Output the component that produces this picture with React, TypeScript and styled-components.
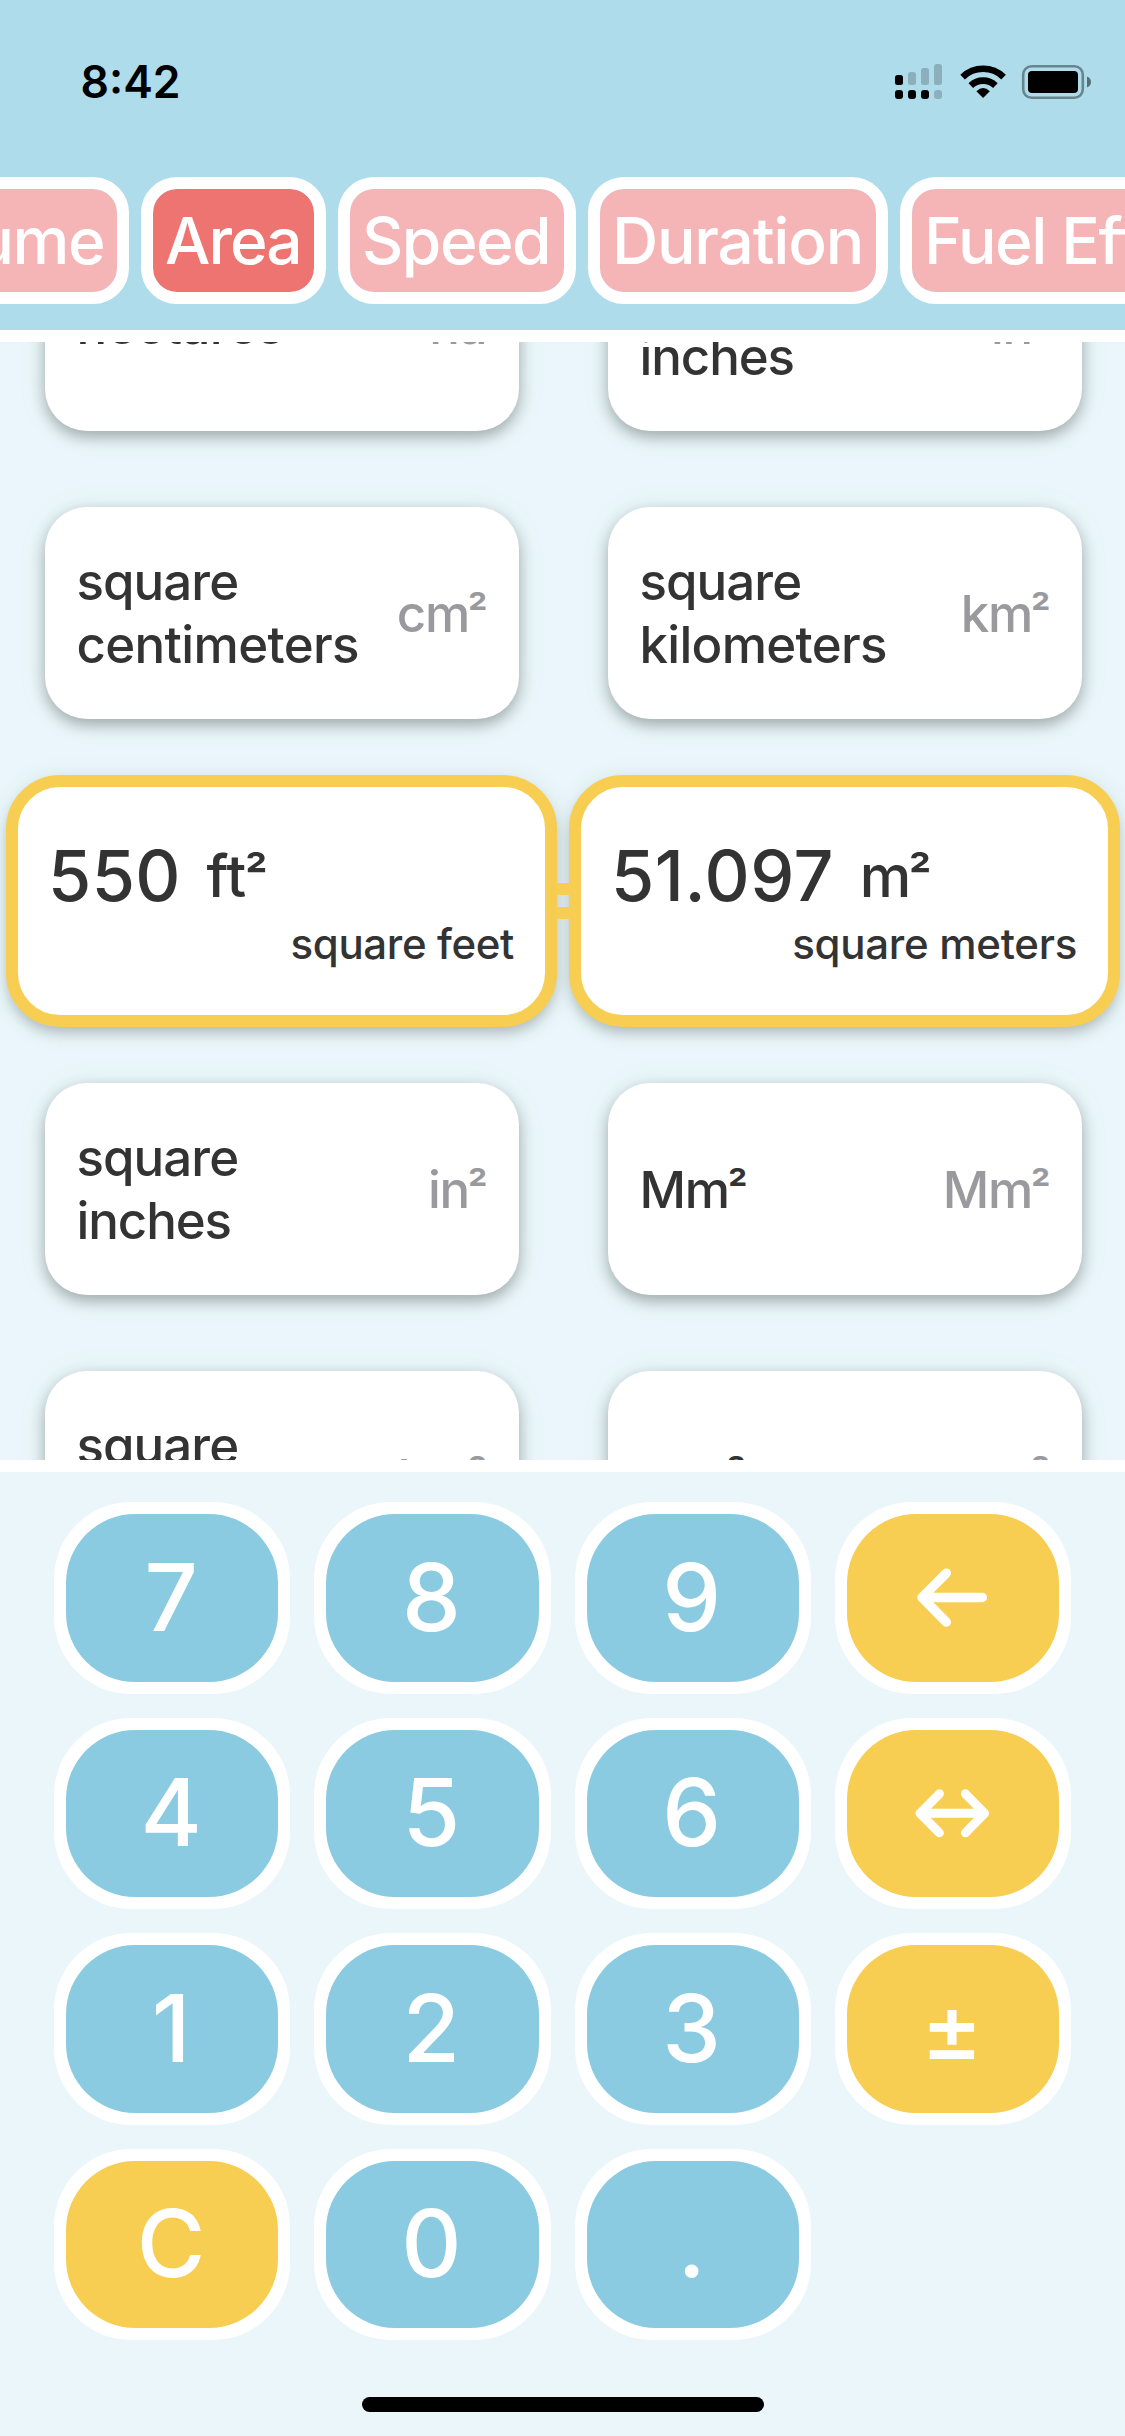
import React from 'react';
import styled, { createGlobalStyle } from 'styled-components';

const GlobalStyle = createGlobalStyle`
  *, *::before, *::after { box-sizing: border-box; }
  body { margin: 0; background: #eaf5fb; }
`;

const Screen = styled.div`
  width: 1125px;
  height: 2436px;
  display: flex;
  flex-direction: column;
  overflow: hidden;
  font-family: Inter, 'Liberation Sans', sans-serif;
  font-weight: 500;
  color: #333333;
  background: #eaf6fb;
`;

/* ---------- header ---------- */

const Header = styled.header`
  flex: none;
  height: 342px;
  background: #aedceb;
  border-bottom: 12px solid #ffffff;
`;

const StatusBar = styled.div`
  height: 177px;
  padding: 55px 34px 0 80.5px;
  display: flex;
  justify-content: space-between;
  align-items: flex-start;
  color: #000000;
`;

const Time = styled.div`
  font-size: 44.5px;
  font-weight: 600;
  line-height: 54px;
`;

const StatusIcons = styled.svg`
  display: block;
  width: 204px;
  height: 54px;
`;

const Tabs = styled.nav`
  display: flex;
  gap: 12px;
  margin-left: -141px;
  width: 1500px;
`;

const Tab = styled.button<{ $width: number; $track: number; $active?: boolean }>`
  flex: none;
  width: ${(p) => p.$width}px;
  height: 127px;
  padding: 0 0 0 12px;
  border: 12px solid #ffffff;
  border-radius: 36px;
  background: ${(p) => (p.$active ? '#ee7471' : '#f5b5b6')};
  background-clip: padding-box;
  color: #ffffff;
  font: inherit;
  font-size: 64px;
  line-height: 103px;
  letter-spacing: ${(p) => p.$track}px;
  text-align: left;
  white-space: nowrap;
`;

/* ---------- unit wheels ---------- */

const Wheel = styled.main`
  flex: none;
  height: 1130px;
  overflow: hidden;
  border-bottom: 12px solid #ffffff;
`;

const Rows = styled.div`
  margin-top: -161px;
  display: flex;
  flex-direction: column;
`;

const Row = styled.div`
  flex: none;
  position: relative;
  height: 288px;
  display: grid;
  grid-template-columns: 563px 563px;
  align-items: center;
  justify-items: center;
`;

const Card = styled.div`
  width: 474px;
  height: 212px;
  padding: 0 32px;
  display: flex;
  align-items: center;
  justify-content: space-between;
  border-radius: 42px;
  background: #ffffff;
  box-shadow: 0 6px 15px rgba(0, 0, 0, 0.3), 0 2px 32px rgba(90, 140, 60, 0.07);
  font-size: 51px;
  line-height: 63px;
`;

const NameLine = styled.div<{ $track: number }>`
  letter-spacing: ${(p) => p.$track}px;
  white-space: nowrap;
`;

const Symbol = styled.span<{ $muted?: boolean }>`
  letter-spacing: -1.2px;
  white-space: nowrap;
  color: ${(p) => (p.$muted ? '#9a999e' : 'inherit')};
`;

const Square = styled.span`
  font-size: 0.86em;
  font-weight: 600;
  line-height: 0;
  position: relative;
  top: -0.06em;
  margin-left: -0.03em;
`;

const SelectedCard = styled.div`
  position: relative;
  z-index: 1;
  width: 551px;
  height: 252px;
  padding: 0 31px 0 30px;
  display: flex;
  flex-direction: column;
  justify-content: center;
  border: 12px solid #f7ce52;
  border-radius: 54px;
  background: #ffffff;
  box-shadow: 0 8px 14px -3px rgba(0, 0, 0, 0.22), 0 3px 24px rgba(40, 80, 40, 0.1);
`;

const ValueRow = styled.div`
  display: flex;
  align-items: center;
  gap: 25.5px;
  height: 84px;
`;

const Value = styled.span<{ $track: number }>`
  font-size: 70px;
  line-height: 84px;
  letter-spacing: ${(p) => p.$track}px;
`;

const ValueUnit = styled.span<{ $track: number }>`
  font-size: 58px;
  line-height: 84px;
  letter-spacing: ${(p) => p.$track}px;
`;

const SelectedName = styled.div<{ $track: number }>`
  font-size: 42px;
  line-height: 51px;
  text-align: right;
  letter-spacing: ${(p) => p.$track}px;
`;

const Equals = styled.div`
  position: absolute;
  z-index: 2;
  left: 556px;
  top: 126px;
  width: 14px;
  height: 36px;
  border: solid #f7ce52;
  border-width: 12px 0;
`;

/* ---------- keypad ---------- */

const Keypad = styled.section`
  flex: 1;
  padding: 30px 54px 0;
  display: flex;
  flex-direction: column;
  align-items: center;
  background: #eaf6fa;
`;

const Keys = styled.div`
  width: 100%;
  display: grid;
  grid-template-columns: repeat(4, 1fr);
  grid-auto-rows: 191.5px;
  gap: 24px;
`;

const Key = styled.button`
  padding: 12px;
  border: 0;
  border-radius: 77px;
  background: #ffffff;
  font: inherit;
  display: flex;
`;

const KeyFace = styled.span<{ $action?: boolean }>`
  flex: 1;
  align-self: stretch;
  display: flex;
  align-items: center;
  justify-content: center;
  border-radius: 69px;
  background: ${(p) => (p.$action ? '#f7ce52' : '#8acbe1')};
  color: #ffffff;
  font-size: 93.5px;
  line-height: 93px;
  padding: 0 2px 1px 0;
`;

const KeyIcon = styled.svg`
  display: block;
  width: 90px;
  height: 60px;
  margin-left: 2px;
  fill: none;
  stroke: #ffffff;
  stroke-linecap: round;
  stroke-linejoin: round;
`;

const HomeIndicator = styled.div`
  width: 402px;
  height: 15px;
  margin-top: 57px;
  border-radius: 8px;
  background: #000000;
`;

/* ---------- data ---------- */

const tabs = [
  { label: 'Volume', width: 270, track: -1.4 },
  { label: 'Area', width: 185, track: -2, active: true },
  { label: 'Speed', width: 238, track: -1.5 },
  { label: 'Duration', width: 300, track: -1.2 },
  { label: 'Fuel Efficiency', width: 520, track: -1.5 },
];

type Unit = { name?: string[]; symbol: string };

const rowsAbove: Unit[][] = [
  [{ name: ['hectares'], symbol: 'ha' }, { name: ['square', 'inches'], symbol: 'in²' }],
  [{ name: ['square', 'centimeters'], symbol: 'cm²' }, { name: ['square', 'kilometers'], symbol: 'km²' }],
];

const rowsBelow: Unit[][] = [
  [{ name: ['square', 'inches'], symbol: 'in²' }, { symbol: 'Mm²' }],
  [{ name: ['square', 'kilometers'], symbol: 'km²' }, { symbol: 'mm²' }],
];

const tracking: Record<string, number> = {
  square: -0.95,
  centimeters: -0.65,
  kilometers: -0.7,
  inches: -1.1,
  hectares: -0.7,
};

const keys: { id: string; action?: boolean }[] = [
  { id: '7' }, { id: '8' }, { id: '9' }, { id: 'back', action: true },
  { id: '4' }, { id: '5' }, { id: '6' }, { id: 'swap', action: true },
  { id: '1' }, { id: '2' }, { id: '3' }, { id: '±', action: true },
  { id: 'C', action: true }, { id: '0' }, { id: '.' },
];

/* ---------- pieces ---------- */

const SymbolText = ({ text }: { text: string }) =>
  text.endsWith('²') ? (
    <>
      {text.slice(0, -1)}
      <Square>²</Square>
    </>
  ) : (
    <>{text}</>
  );

const UnitCard = ({ unit }: { unit: Unit }) => (
  <Card>
    {unit.name ? (
      <div>
        {unit.name.map((line) => (
          <NameLine key={line} $track={tracking[line] ?? 0}>{line}</NameLine>
        ))}
      </div>
    ) : (
      <Symbol><SymbolText text={unit.symbol} /></Symbol>
    )}
    <Symbol $muted><SymbolText text={unit.symbol} /></Symbol>
  </Card>
);

const UnitRow = ({ units }: { units: Unit[] }) => (
  <Row>
    {units.map((u, i) => <UnitCard key={i} unit={u} />)}
  </Row>
);

const keyContent = (id: string) => {
  if (id === 'back') {
    return (
      <KeyIcon viewBox="908 1567.5 90 60" strokeWidth="9.4">
        <path d="M982.4 1598H922M946.3 1573.6L922 1598L946.3 1622.6" />
      </KeyIcon>
    );
  }
  if (id === 'swap') {
    return (
      <KeyIcon viewBox="908 1783 90 60" strokeWidth="9">
        <path d="M920 1813.3H984.6M939.4 1793.8L920 1813.3L939.4 1832.8M965.4 1793.8L984.6 1813.3L965.4 1832.8" />
      </KeyIcon>
    );
  }
  return id;
};

const Status = () => (
  <StatusIcons viewBox="887 55 204 54">
    <g fill="#000">
      <rect x="895" y="75" width="8" height="10" rx="2.5" />
      <rect x="908" y="72" width="8" height="13" rx="2.5" opacity=".2" />
      <rect x="921" y="68" width="8" height="17" rx="2.5" opacity=".2" />
      <rect x="934" y="64" width="8" height="21" rx="2.5" opacity=".2" />
      <rect x="895" y="90" width="8" height="9" rx="3" />
      <rect x="908" y="90" width="8" height="9" rx="3" />
      <rect x="921" y="90" width="8" height="9" rx="3" />
      <rect x="934" y="90" width="8" height="9" rx="3" opacity=".2" />
    </g>
    <g fill="none" stroke="#000" strokeWidth="6.6">
      <path d="M962.6 77.1A29.5 29.5 0 0 1 1003.6 77.1" />
      <path d="M970.8 85.6A17.8 17.8 0 0 1 995.4 85.6" />
    </g>
    <path d="M983.1 98L976.4 91.2Q983.1 84.8 989.8 91.2Z" fill="#000" />
    <rect x="1023.2" y="66.2" width="59.6" height="31.6" rx="8.5" fill="none" stroke="#000" strokeWidth="2.6" opacity=".4" />
    <rect x="1028" y="71" width="50" height="22" rx="4" fill="#000" />
    <path d="M1087 76.6Q1091 78.4 1091 82T1087 87.4Z" fill="#000" opacity=".5" />
  </StatusIcons>
);

export default function App() {
  return (
    <Screen>
      <GlobalStyle />
      <Header>
        <StatusBar>
          <Time>8:42</Time>
          <Status />
        </StatusBar>
        <Tabs>
          {tabs.map((t) => (
            <Tab key={t.label} $width={t.width} $track={t.track} $active={t.active}>
              {t.label}
            </Tab>
          ))}
        </Tabs>
      </Header>

      <Wheel>
        <Rows>
          {rowsAbove.map((r, i) => <UnitRow key={i} units={r} />)}
          <Row>
            <SelectedCard>
              <ValueRow>
                <Value $track={0.4}>550</Value>
                <ValueUnit $track={0.2}><SymbolText text="ft²" /></ValueUnit>
              </ValueRow>
              <SelectedName $track={-0.37}>square feet</SelectedName>
            </SelectedCard>
            <SelectedCard>
              <ValueRow>
                <Value $track={0.6}>51.097</Value>
                <ValueUnit $track={-1}><SymbolText text="m²" /></ValueUnit>
              </ValueRow>
              <SelectedName $track={-0.28}>square meters</SelectedName>
            </SelectedCard>
            <Equals />
          </Row>
          {rowsBelow.map((r, i) => <UnitRow key={i} units={r} />)}
        </Rows>
      </Wheel>

      <Keypad>
        <Keys>
          {keys.map((k) => (
            <Key key={k.id}>
              <KeyFace $action={k.action}>{keyContent(k.id)}</KeyFace>
            </Key>
          ))}
        </Keys>
        <HomeIndicator />
      </Keypad>
    </Screen>
  );
}
